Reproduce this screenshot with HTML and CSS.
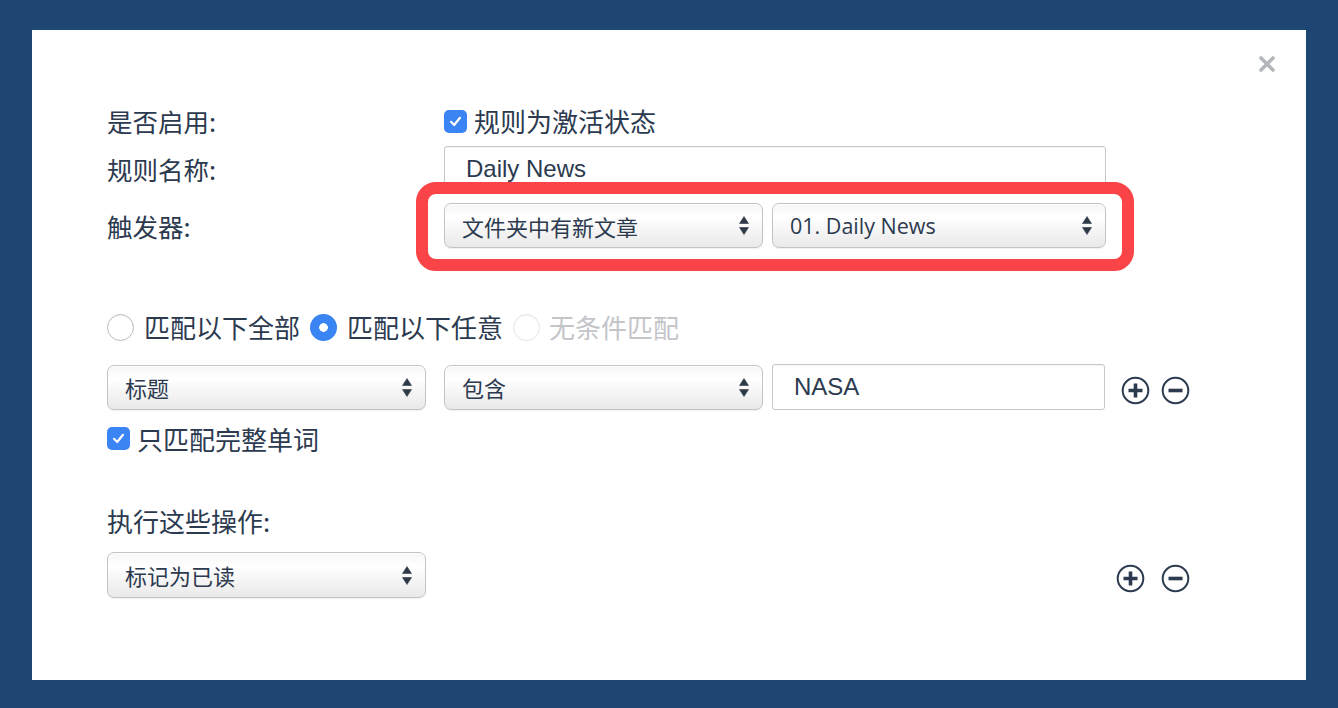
FILE: index.html
```html
<!DOCTYPE html>
<html lang="zh-CN">
<head>
<meta charset="utf-8">
<title>规则</title>
<link rel="stylesheet" href="styles.css">
</head>
<body>
<div class="panel">
  <button class="close" aria-label="close">
    <svg width="16" height="16" viewBox="0 0 16 16"><path d="M2 2L14 14M14 2L2 14" stroke="#b3b7bc" stroke-width="3.6" stroke-linecap="round"/></svg>
  </button>

  <div class="row r1">
    <div class="label">是否启用:</div>
    <label class="check">
      <span class="box"><svg width="15" height="15" viewBox="0 0 15 15"><path d="M3 7.8L6.2 11L12 3.8" fill="none" stroke="#fff" stroke-width="2.2" stroke-linecap="round" stroke-linejoin="round"/></svg></span>
      <span class="check-text">规则为激活状态</span>
    </label>
  </div>

  <div class="row r2">
    <div class="label">规则名称:</div>
    <div class="input wide">Daily News</div>
  </div>

  <div class="row r3">
    <div class="label">触发器:</div>
    <div class="trigger">
      <div class="select s319"><span>文件夹中有新文章</span><svg class="arr" width="10" height="19" viewBox="0 0 10 19"><path d="M5 0.5L9.5 7.5H0.5Z M5 18.5L9.5 11.5H0.5Z" fill="#2f3a48" stroke="#2f3a48" stroke-width="0.6" stroke-linejoin="round"/></svg></div>
      <div class="select s334 latin"><span>01. Daily News</span><svg class="arr" width="10" height="19" viewBox="0 0 10 19"><path d="M5 0.5L9.5 7.5H0.5Z M5 18.5L9.5 11.5H0.5Z" fill="#2f3a48" stroke="#2f3a48" stroke-width="0.6" stroke-linejoin="round"/></svg></div>
      <div class="highlight"></div>
    </div>
  </div>

  <div class="row radios">
    <span class="radio"></span><span class="rtext">匹配以下全部</span>
    <span class="radio on"></span><span class="rtext">匹配以下任意</span>
    <span class="radio off"></span><span class="rtext dis">无条件匹配</span>
  </div>

  <div class="row cond">
    <div class="select s319"><span>标题</span><svg class="arr" width="10" height="19" viewBox="0 0 10 19"><path d="M5 0.5L9.5 7.5H0.5Z M5 18.5L9.5 11.5H0.5Z" fill="#2f3a48" stroke="#2f3a48" stroke-width="0.6" stroke-linejoin="round"/></svg></div>
    <div class="select s319 ml18"><span>包含</span><svg class="arr" width="10" height="19" viewBox="0 0 10 19"><path d="M5 0.5L9.5 7.5H0.5Z M5 18.5L9.5 11.5H0.5Z" fill="#2f3a48" stroke="#2f3a48" stroke-width="0.6" stroke-linejoin="round"/></svg></div>
    <div class="input s334 ml9 nasa">NASA</div>
    <div class="icons i1">
      <svg width="29" height="29" viewBox="0 0 29 29"><circle cx="14.5" cy="14.5" r="12.8" fill="none" stroke="#2c3a4f" stroke-width="2"/><path d="M14.5 7.5V21.5M7.5 14.5H21.5" stroke="#2c3a4f" stroke-width="3.6"/></svg>
      <svg width="29" height="29" viewBox="0 0 29 29"><circle cx="14.5" cy="14.5" r="12.8" fill="none" stroke="#2c3a4f" stroke-width="2"/><path d="M7.5 14.5H21.5" stroke="#2c3a4f" stroke-width="3.6"/></svg>
    </div>
  </div>

  <div class="row whole">
    <label class="check">
      <span class="box"><svg width="15" height="15" viewBox="0 0 15 15"><path d="M3 7.8L6.2 11L12 3.8" fill="none" stroke="#fff" stroke-width="2.2" stroke-linecap="round" stroke-linejoin="round"/></svg></span>
      <span class="check-text">只匹配完整单词</span>
    </label>
  </div>

  <div class="section-title">执行这些操作:</div>

  <div class="row action">
    <div class="select s319"><span>标记为已读</span><svg class="arr" width="10" height="19" viewBox="0 0 10 19"><path d="M5 0.5L9.5 7.5H0.5Z M5 18.5L9.5 11.5H0.5Z" fill="#2f3a48" stroke="#2f3a48" stroke-width="0.6" stroke-linejoin="round"/></svg></div>
    <div class="icons i2">
      <svg width="29" height="29" viewBox="0 0 29 29"><circle cx="14.5" cy="14.5" r="12.8" fill="none" stroke="#2c3a4f" stroke-width="2"/><path d="M14.5 7.5V21.5M7.5 14.5H21.5" stroke="#2c3a4f" stroke-width="3.6"/></svg>
      <svg width="29" height="29" viewBox="0 0 29 29"><circle cx="14.5" cy="14.5" r="12.8" fill="none" stroke="#2c3a4f" stroke-width="2"/><path d="M7.5 14.5H21.5" stroke="#2c3a4f" stroke-width="3.6"/></svg>
    </div>
  </div>
</div>
</body>
</html>
```

FILE: styles.css
```css
html, body {
  margin: 0;
  padding: 0;
}
body {
  background: #1f4572;
  width: 1338px;
  height: 708px;
  overflow: hidden;
  font-family: "Noto Sans CJK SC", "Noto Sans", sans-serif;
  color: #2c3a4f;
}
.panel {
  position: relative;
  margin: 30px 32px 0;
  width: 1274px;
  height: 650px;
  background: #fff;
  box-sizing: border-box;
  padding: 78px 116px 0 75px;
}
.close {
  position: absolute;
  top: 26px;
  right: 31px;
  width: 16px;
  height: 16px;
  padding: 0;
  border: 0;
  background: none;
  display: flex;
}
.row {
  display: flex;
  align-items: center;
}
.label {
  width: 337px;
  flex: none;
  font-size: 25.5px;
  line-height: 30px;
}
.r1 { height: 26px; margin-bottom: 12px; }
.r2 { height: 46px; margin-bottom: 11px; }
.r3 { height: 45px; }

.check {
  display: flex;
  align-items: center;
  gap: 7px;
}
.box {
  width: 23px;
  height: 23px;
  border-radius: 5px;
  background: #3a84f4;
  display: flex;
  align-items: center;
  justify-content: center;
  flex: none;
}
.check-text {
  font-size: 26px;
  line-height: 30px;
}
.input {
  height: 46px;
  box-sizing: border-box;
  border: 1px solid #c6c8cc;
  border-radius: 3px;
  background: #fff;
  display: flex;
  align-items: center;
  font-family: "Liberation Sans", Arial, sans-serif;
  font-size: 24px;
  padding-left: 21px;
  box-shadow: inset 0 1px 1px rgba(0,0,0,0.04);
}
.wide { width: 662px; }
.trigger {
  position: relative;
  display: flex;
  gap: 9px;
}
.highlight {
  position: absolute;
  top: -21px;
  bottom: -23px;
  left: -28px;
  right: -28px;
  border: 12px solid #fb4447;
  border-radius: 20px;
  pointer-events: none;
}
.select {
  height: 45px;
  box-sizing: border-box;
  border: 1px solid #c2c4c8;
  border-radius: 7px;
  background: linear-gradient(#f6f6f6 0%, #ffffff 30%, #e9e9e9 100%);
  box-shadow: inset 0 1px 0 #fff, 0 1px 1px rgba(0,0,0,0.06);
  display: flex;
  align-items: center;
  justify-content: space-between;
  padding: 0 13px 0 17px;
  font-size: 22px;
  line-height: 28px;
  flex: none;
}
.select.latin span {
  font-family: "Open Sans", "Noto Sans CJK SC", sans-serif;
  font-size: 21.5px;
}
.select .arr { flex: none; }
.s319 { width: 319px; }
.s334 { width: 334px; }
.ml18 { margin-left: 18px; }
.ml9 { margin-left: 9px; }
.nasa { height: 46px; }

.radios {
  margin-top: 65px;
  height: 28px;
}
.radio {
  width: 27px;
  height: 27px;
  box-sizing: border-box;
  border-radius: 50%;
  border: 1px solid #b9bbbf;
  background: #fff;
  flex: none;
  box-shadow: inset 0 1px 1px rgba(0,0,0,0.05);
}
.radio.on {
  border: 0;
  background: radial-gradient(circle, #fff 0 4px, #3a84f4 4.6px);
}
.radio.off {
  border-color: #e3e4e6;
}
.rtext {
  font-size: 26px;
  line-height: 30px;
  margin: 0 10px 0 10px;
}
.rtext.dis { color: #c3c5c9; margin-left: 9px; }

.cond {
  margin-top: 23px;
  height: 46px;
}
.icons {
  display: flex;
  align-items: center;
}
.i1 { margin-left: 16px; gap: 11px; margin-top: 6px; }
.i2 { margin-left: auto; gap: 16px; margin-top: 6px; }

.whole {
  margin-top: 17px;
  height: 23px;
}
.section-title {
  margin-top: 56px;
  font-size: 26px;
  line-height: 30px;
}
.action {
  margin-top: 16px;
  height: 46px;
}
.action .select { height: 46px; }
```
